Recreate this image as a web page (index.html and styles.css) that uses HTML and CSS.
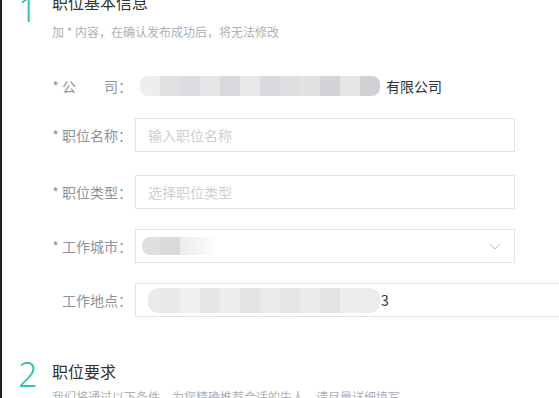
FILE: index.html
```html
<!DOCTYPE html>
<html lang="zh-CN">
<head>
<meta charset="utf-8">
<title>发布职位</title>
<link rel="stylesheet" href="styles.css">
</head>
<body>
<div class="page">
  <section class="step step-first">
    <div class="step-head">
      <span class="step-num">1</span>
      <div class="step-text">
        <h2 class="step-title">职位基本信息</h2>
        <p class="hint">加 * 内容，在确认发布成功后，将无法修改</p>
      </div>
    </div>
    <div class="form">
      <div class="row row-company">
        <span class="label">* 公&emsp;&emsp;司：</span>
        <div class="value">
          <span class="mosaic mosaic-company">
            <i class="m1"></i><i class="m2"></i><i class="m3"></i><i class="m4"></i><i class="m5"></i><i class="m6"></i><i class="m7"></i><i class="m8"></i><i class="m9"></i><i class="m10"></i><i class="m11"></i><i class="m12"></i>
          </span>
          <span class="value-text">有限公司</span>
        </div>
      </div>
      <div class="row row-name">
        <span class="label">* 职位名称：</span>
        <div class="field"><span class="placeholder">输入职位名称</span></div>
      </div>
      <div class="row">
        <span class="label">* 职位类型：</span>
        <div class="field"><span class="placeholder">选择职位类型</span></div>
      </div>
      <div class="row">
        <span class="label">* 工作城市：</span>
        <div class="field">
          <span class="mosaic mosaic-city"><i class="c1"></i><i class="c2"></i><i class="c3"></i></span>
          <svg class="chevron" width="12" height="7" viewBox="0 0 12 7"><path d="M0.5 0.5 L6 6 L11.5 0.5" fill="none" stroke="#b9bcc6" stroke-width="1"/></svg>
        </div>
      </div>
      <div class="row">
        <span class="label">工作地点：</span>
        <div class="field field-wide">
          <span class="mosaic mosaic-addr"><i class="a1"></i><i class="a2"></i><i class="a3"></i><i class="a4"></i><i class="a5"></i><i class="a6"></i><i class="a7"></i><i class="a8"></i><i class="a9"></i><i class="a10"></i><i class="a11"></i><i class="a12"></i></span>
          <span class="value-text">3</span>
        </div>
      </div>
    </div>
  </section>
  <section class="step step-second">
    <div class="step-head">
      <span class="step-num">2</span>
      <div class="step-text">
        <h2 class="step-title">职位要求</h2>
        <p class="hint">我们将通过以下条件，为您精确推荐合适的牛人，请尽量详细填写</p>
      </div>
    </div>
  </section>
</div>
</body>
</html>
```

FILE: styles.css
```css
html, body {
  margin: 0;
  padding: 0;
  background: #fff;
  overflow: hidden;
}
body {
  font-family: "Noto Sans CJK SC", "Noto Sans", sans-serif;
  color: #333;
}
.page {
  border-left: 2px solid #1f1f1f;
  min-height: 398px;
  padding-left: 16px;
  box-sizing: border-box;
}
.step-first {
  margin-top: -8px;
}
.step-second {
  margin-top: 40px;
}
.step-head {
  display: flex;
  align-items: flex-start;
}
.step-num {
  width: 34px;
  flex: none;
  font-family: "Noto Sans", sans-serif;
  font-weight: 300;
  font-size: 34px;
  line-height: 34px;
  color: #2dc5ad;
}
.step-title {
  margin: 3px 0 0;
  font-size: 16px;
  line-height: 22px;
  font-weight: 400;
  color: #333;
}
.step-first .step-title {
  margin-top: -1px;
}
.step-first .hint {
  margin-top: 11px;
}
.hint {
  margin: 7px 0 0;
  font-size: 12px;
  line-height: 16px;
  color: #adb0b8;
  white-space: nowrap;
}
.form {
  margin-left: 34px;
  margin-top: 29px;
  display: flex;
  flex-direction: column;
  gap: 20px;
}
.row {
  display: flex;
  align-items: center;
  height: 34px;
}
.row-company {
  margin-bottom: -5px;
}
.row-name {
  margin-bottom: 3px;
}
.label {
  width: 83px;
  flex: none;
  padding-right: 3px;
  box-sizing: border-box;
  text-align: right;
  font-size: 14px;
  color: #8e929c;
  white-space: nowrap;
}
.value {
  display: flex;
  align-items: center;
  padding-left: 5px;
}
.value-text {
  font-size: 14px;
  color: #333;
  margin-left: 6px;
}
.field {
  width: 380px;
  height: 34px;
  flex: none;
  border: 1px solid #e2e3e9;
  box-sizing: border-box;
  padding: 0 13px 0 12px;
  display: flex;
  align-items: center;
  font-size: 14px;
}
.field-wide {
  width: 470px;
}
.placeholder {
  color: #cdcfd5;
}
.chevron {
  margin-left: auto;
  display: block;
}
.mosaic {
  display: flex;
}
.mosaic i {
  display: block;
  width: 20px;
}
.mosaic-company {
  height: 20px;
}
.mosaic-company i { height: 20px; }
.m1 { background: #eeeef0; border-radius: 8px 0 0 8px; }
.m2 { background: #e0e0e3; }
.m3 { background: #dcdce0; }
.m4 { background: #e6e6e8; }
.m5 { background: #d8d9dd; }
.m6 { background: #e8e8ea; }
.m7 { background: #dadbde; }
.m8 { background: #dedee1; }
.m9 { background: #e2e2e4; }
.m10 { background: #d3d4d8; }
.m11 { background: #e6e6e7; }
.m12 { background: #d0d1d5; border-radius: 0 8px 8px 0; }
.mosaic-city {
  margin-left: -6px;
  height: 18px;
}
.mosaic-city i { height: 18px; }
.c1 { width: 18px !important; background: #dfdfe2; border-radius: 8px 0 0 8px; }
.c2 { background: #d9d9dc; }
.c3 { width: 36px !important; background: linear-gradient(90deg, #ececee, #fdfdfd); }
.mosaic-addr {
  height: 25px;
}
.mosaic-addr i { height: 25px; }
.a1 { width: 12px !important; background: #ebebed; border-radius: 10px 0 0 10px; }
.a2 { background: #e9e9eb; }
.a3 { background: #efeff1; }
.a4 { background: #e6e6e8; }
.a5 { background: #ededef; }
.a6 { background: #e4e4e7; }
.a7 { background: #eaeaec; }
.a8 { background: #e5e5e7; }
.a9 { background: #ebebed; }
.a10 { background: #e3e3e6; }
.a11 { background: #eeeef0; }
.a12 { background: #ececee; border-radius: 0 10px 10px 0; }
.field-wide .value-text {
  margin-left: 1px;
}
```
